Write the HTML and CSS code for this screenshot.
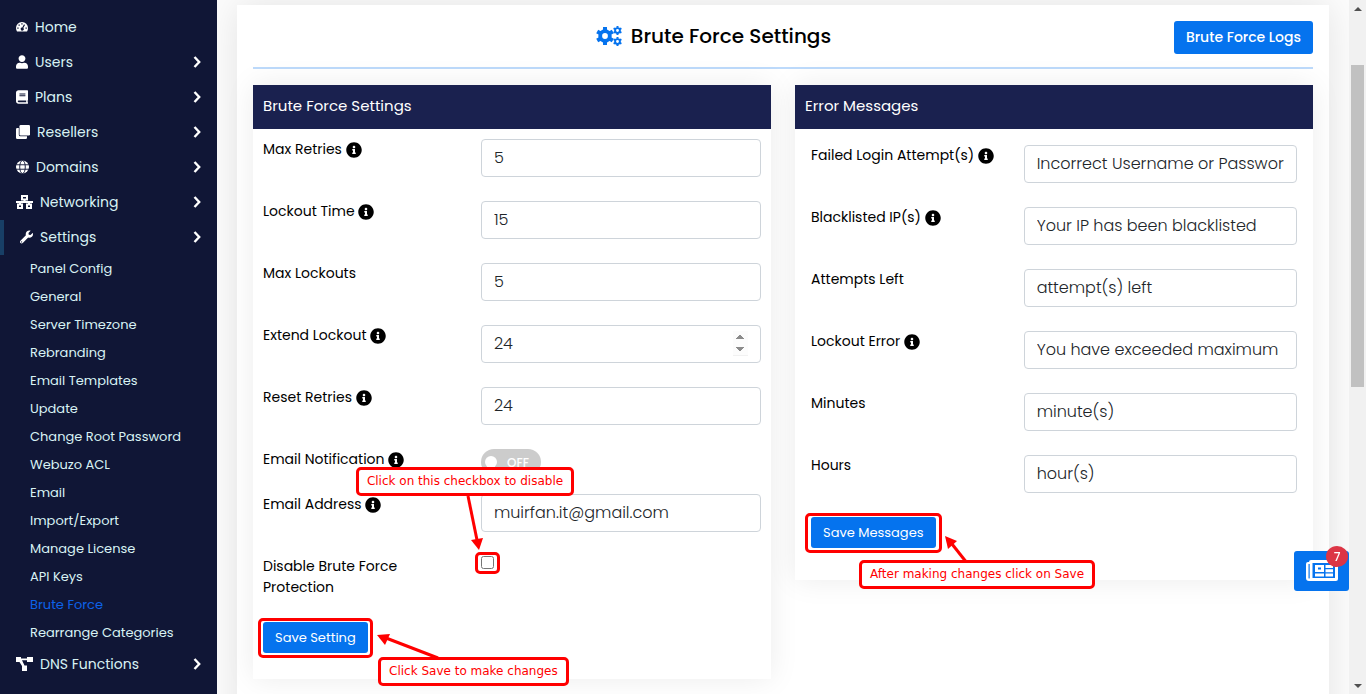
FILE: index.html
```
<!DOCTYPE html>
<html lang="en">
<head>
<meta charset="utf-8">
<title>Brute Force Settings</title>
<link rel="stylesheet" href="styles.css">
</head>
<body>
<svg class="defs" aria-hidden="true">
  <symbol id="info" viewBox="0 0 512 512"><path d="M256 8C119.043 8 8 119.083 8 256c0 136.997 111.043 248 248 248s248-111.003 248-248C504 119.083 392.957 8 256 8zm0 110c23.196 0 42 18.804 42 42s-18.804 42-42 42-42-18.804-42-42 18.804-42 42-42zm56 254c0 6.627-5.373 12-12 12h-88c-6.627 0-12-5.373-12-12v-24c0-6.627 5.373-12 12-12h12v-64h-12c-6.627 0-12-5.373-12-12v-24c0-6.627 5.373-12 12-12h64c6.627 0 12 5.373 12 12v100h12c6.627 0 12 5.373 12 12v24z"/></symbol>
  <symbol id="chevron" viewBox="0 0 8 12"><path d="M1.500 1 6.200 6l-4.700 5" fill="none" stroke="currentColor" stroke-width="2.400"/></symbol>
  <symbol id="gear" viewBox="-10 -10 20 20">
    <path fill-rule="evenodd" d="M0-7.500A7.500 7.500 0 1 1 0 7.500A7.500 7.500 0 1 1 0-7.500M0-3.200A3.200 3.200 0 1 0 0 3.200A3.200 3.200 0 1 0 0-3.200"/>
    <g id="teeth"><rect x="-2.200" y="-10" width="4.400" height="4"/><rect x="-2.200" y="6" width="4.400" height="4"/></g>
    <use href="#teeth" transform="rotate(60)"/><use href="#teeth" transform="rotate(120)"/>
  </symbol>
</svg>

<nav class="sidebar">
  <a class="item" href="#"><svg class="i12" viewBox="0 0 12 12"><path fill-rule="evenodd" d="M6 1a6 6 0 0 1 6 6c0 1.400-.4 2.700-1 3.500H1A6.500 6.500 0 0 1 0 7a6 6 0 0 1 6-6M5.300 2.200v1.300h1.300V2.200zM2.500 3.500v1.300h1.300V3.500zM1.300 6.500v1.300h1.300V6.500zM9.500 6.500v1.300h1.300V6.500zM8 3.300 6.300 6.600a1.500 1.500 0 1 0 1 .5L9 3.900z"/></svg>Home</a>
  <a class="item" href="#"><svg class="i12" viewBox="0 0 448 512"><path d="M224 256c70.700 0 128-57.300 128-128S294.700 0 224 0 96 57.300 96 128s57.300 128 128 128zm89.600 32h-16.700c-22.200 10.200-46.900 16-72.900 16s-50.600-5.800-72.900-16h-16.700C60.200 288 0 348.200 0 422.400V464c0 26.500 21.500 48 48 48h352c26.500 0 48-21.500 48-48v-41.600c0-74.200-60.200-134.400-134.400-134.400z"/></svg>Users<svg class="chev"><use href="#chevron"/></svg></a>
  <a class="item" href="#"><svg class="i12" viewBox="0 0 448 512"><path d="M448 360V24c0-13.300-10.700-24-24-24H96C43 0 0 43 0 96v320c0 53 43 96 96 96h328c13.300 0 24-10.700 24-24v-16c0-7.500-3.500-14.300-8.900-18.700-4.200-15.400-4.200-59.300 0-74.700 5.400-4.300 8.900-11.100 8.900-18.600zM128 134c0-3.300 2.700-6 6-6h212c3.300 0 6 2.700 6 6v20c0 3.300-2.700 6-6 6H134c-3.300 0-6-2.700-6-6v-20zm0 64c0-3.300 2.700-6 6-6h212c3.300 0 6 2.700 6 6v20c0 3.300-2.700 6-6 6H134c-3.300 0-6-2.700-6-6v-20zm253.400 250H96c-17.700 0-32-14.300-32-32 0-17.600 14.400-32 32-32h285.400c-1.900 17.100-1.900 46.900 0 64z"/></svg>Plans<svg class="chev"><use href="#chevron"/></svg></a>
  <a class="item" href="#"><svg class="i14" viewBox="0 0 14 14"><rect x="3.500" y="0" width="10.500" height="10.500" rx="1.200"/><path d="M2.800 3v6.800A1.500 1.500 0 0 0 4.300 11.300H11v1.400a1.300 1.300 0 0 1-1.300 1.300H1.300A1.300 1.300 0 0 1 0 12.700V4.300A1.300 1.300 0 0 1 1.300 3z"/></svg>Resellers<svg class="chev"><use href="#chevron"/></svg></a>
  <a class="item" href="#"><svg class="i13" viewBox="0 0 14 14"><circle cx="7" cy="7" r="7"/><g class="cut"><ellipse cx="7" cy="7" rx="3" ry="7"/><path d="M0 4.600h14M0 9.400h14"/></g></svg>Domains<svg class="chev"><use href="#chevron"/></svg></a>
  <a class="item" href="#"><svg class="i17" viewBox="0 0 17 14"><g class="line"><path d="M6 1h5v3.500H6zM2 9.500h4V13H2zM11 9.500h4V13h-4zM8.500 4.500V7M0 7h17M4 7v2.500M13 7v2.500"/></g></svg>Networking<svg class="chev"><use href="#chevron"/></svg></a>
  <a class="item current" href="#"><svg class="i13" viewBox="0 0 512 512"><path d="M507.730 109.100c-2.240-9.030-13.540-12.090-20.120-5.510l-74.360 74.360-67.880-11.310-11.310-67.880 74.360-74.360c6.620-6.620 3.430-17.900-5.660-20.160-47.380-11.740-99.550.91-136.580 37.930-39.640 39.640-50.550 97.100-34.050 147.200L18.740 402.760c-24.990 24.990-24.990 65.510 0 90.500 24.990 24.990 65.510 24.990 90.500 0l213.210-213.210c50.120 16.710 107.470 5.680 147.370-34.220 37.070-37.070 49.700-89.320 37.910-136.730zM64 472c-13.250 0-24-10.750-24-24 0-13.260 10.750-24 24-24s24 10.740 24 24c0 13.250-10.750 24-24 24z"/></svg>Settings<svg class="chev"><use href="#chevron"/></svg></a>
  <ul class="sub">
    <li><a href="#">Panel Config</a></li>
    <li><a href="#">General</a></li>
    <li><a href="#">Server Timezone</a></li>
    <li><a href="#">Rebranding</a></li>
    <li><a href="#">Email Templates</a></li>
    <li><a href="#">Update</a></li>
    <li><a href="#">Change Root Password</a></li>
    <li><a href="#">Webuzo ACL</a></li>
    <li><a href="#">Email</a></li>
    <li><a href="#">Import/Export</a></li>
    <li><a href="#">Manage License</a></li>
    <li><a href="#">API Keys</a></li>
    <li><a class="active" href="#">Brute Force</a></li>
    <li><a href="#">Rearrange Categories</a></li>
  </ul>
  <a class="item" href="#"><svg class="i17" viewBox="0 0 17 14"><path d="M0 0h5v1.500h6V0h6v5h-6V3.300H6L8.500 8.500H11V14H6V9L3.500 5H0z"/></svg>DNS Functions<svg class="chev"><use href="#chevron"/></svg></a>
</nav>

<main class="main">
  <section class="card">
    <header class="head">
      <h1><svg class="gears" viewBox="0 0 26 20"><use href="#gear" x="0" y="1" width="18" height="18"/><use href="#gear" x="17" y="0" width="9" height="9"/><use href="#gear" x="17" y="11" width="9" height="9"/></svg>Brute Force Settings</h1>
      <a class="btn logs" href="#">Brute Force Logs</a>
    </header>
    <div class="panels">
      <form class="panel">
        <h2>Brute Force Settings</h2>
        <div class="fields">
          <div class="row"><label for="retries">Max Retries <svg class="info"><use href="#info"/></svg></label><input class="text" id="retries" type="number" value="5"></div>
          <div class="row"><label for="time">Lockout Time <svg class="info"><use href="#info"/></svg></label><input class="text" id="time" type="number" value="15"></div>
          <div class="row"><label for="max">Max Lockouts</label><input class="text" id="max" type="number" value="5"></div>
          <div class="row"><label for="extend">Extend Lockout <svg class="info"><use href="#info"/></svg></label><input class="text spin" id="extend" type="number" value="24"></div>
          <div class="row"><label for="reset">Reset Retries <svg class="info"><use href="#info"/></svg></label><input class="text" id="reset" type="number" value="24"></div>
          <div class="row short"><label for="notify">Email Notification <svg class="info"><use href="#info"/></svg></label><span class="switch"><input id="notify" type="checkbox"><span>OFF</span></span></div>
          <div class="row"><label for="email">Email Address <svg class="info"><use href="#info"/></svg></label><input class="text" id="email" type="text" value="muirfan.it@gmail.com"></div>
          <div class="row"><label for="disable">Disable Brute Force<br>Protection</label>
            <span class="target tick"><input id="disable" type="checkbox">
              <svg class="arrow arrow-tick" viewBox="0 0 20 58"><path class="shaft" d="M5 2 14 46"/><path d="M16 56 8 46l12-2z"/></svg>
              <span class="note note-tick">Click on this checkbox to disable</span></span></div>
          <span class="target"><button class="btn" type="button">Save Setting</button>
            <svg class="arrow arrow-setting" viewBox="0 0 64 28"><path class="shaft" d="M62 26 10 6"/><path d="M1 3 14 2 9 13z"/></svg>
            <span class="note note-setting">Click Save to make changes</span></span>
        </div>
      </form>
      <form class="panel">
        <h2>Error Messages</h2>
        <div class="fields wide">
          <div class="row"><label for="failed">Failed Login Attempt(s) <svg class="info"><use href="#info"/></svg></label><input class="text" id="failed" type="text" value="Incorrect Username or Password"></div>
          <div class="row"><label for="black">Blacklisted IP(s) <svg class="info"><use href="#info"/></svg></label><input class="text" id="black" type="text" value="Your IP has been blacklisted"></div>
          <div class="row"><label for="left">Attempts Left</label><input class="text" id="left" type="text" value="attempt(s) left"></div>
          <div class="row"><label for="lockerr">Lockout Error <svg class="info"><use href="#info"/></svg></label><input class="text" id="lockerr" type="text" value="You have exceeded maximum"></div>
          <div class="row"><label for="minutes">Minutes</label><input class="text" id="minutes" type="text" value="minute(s)"></div>
          <div class="row"><label for="hours">Hours</label><input class="text" id="hours" type="text" value="hour(s)"></div>
          <span class="target"><button class="btn" type="button">Save Messages</button>
            <svg class="arrow arrow-messages" viewBox="0 0 26 30"><path class="shaft" d="M23 28 8 9"/><path d="M1 1 13 6 4 14z"/></svg>
            <span class="note note-messages">After making changes click on Save</span></span>
        </div>
      </form>
    </div>
  </section>
</main>

<div class="scrollbar" aria-hidden="true"><i class="up"></i><i class="thumb"></i><i class="down"></i></div>
<button class="news" type="button" aria-label="News"><svg viewBox="0 0 32 22"><path fill-rule="evenodd" d="M5 0h25a2 2 0 0 1 2 2v17a2 2 0 0 1-2 2H3a3 3 0 0 1-3-3V4a2 2 0 0 1 2-2h1a2 2 0 0 1 2-2M2.500 4v14a.6.600 0 0 0 1.200 0V4zM6.500 3v15h22.500V3z"/><path fill-rule="evenodd" d="M9 5h9v7H9zM12 7.500v2h3v-2zM19.500 5H27v3h-7.500zM19.500 9.200H27v3h-7.500zM9 13.500h9v3H9zM19.500 13.500H27v3h-7.500z"/></svg><span class="badge">7</span></button>
</body>
</html>
```
FILE: styles.css
```
* { box-sizing: border-box; }
body {
  margin: 0; height: 100vh; overflow: hidden;
  display: grid; grid-template-columns: 217px 1fr 17px;
  font: 14px/21px Poppins, Inter, sans-serif; color: #000; background: #fff;
}
.defs { position: absolute; width: 0; height: 0; }
svg { fill: currentColor; flex: none; }
a { text-decoration: none; color: inherit; }

.sidebar { background: #101636; color: #d8f2f4; padding-top: 10px; overflow: hidden; }
.item { display: flex; align-items: center; gap: 7px; height: 35px; padding: 0 16px 1px; }
.item svg { color: #fff; height: 14px; }
.item.current { border-left: 4px solid #183f66; }
.i12 { width: 12px; }
.i13 { width: 13px; }
.i14 { width: 14px; }
.i17 { width: 17px; }
.item .chev { width: 8px; height: 12px; margin-left: auto; }
.cut { fill: none; stroke: #101636; stroke-width: 1; }
.line { fill: none; stroke: #fff; stroke-width: 2; }
.sub { list-style: none; margin: 0; padding: 0 0 0 30px; font-size: 13px; }
.sub a { display: block; line-height: 28px; }
.sub .active { color: #0d62e8; }

.main { overflow: hidden; padding: 5px 20px 0; background: #fcfcfc; }
.card { background: #fff; padding: 16px 16px 80px; box-shadow: 0 0 35px rgba(0, 0, 0, .1); }
.head { display: flex; align-items: center; padding-bottom: 13px; border-bottom: 2px solid #bddafb; }
h1 { flex: 1; display: flex; justify-content: center; align-items: center; gap: 9px; margin: 0; padding-bottom: 4px; font-size: 20px; line-height: 28px; font-weight: 500; }
.gears { width: 26px; height: 20px; color: #0573ee; }
.btn { display: inline-block; border: 0; border-radius: 3px; background: #0573ee; color: #fff; font: 400 13px/21px Poppins, Inter, sans-serif; padding: 5px 12px; }
.logs { font-size: 14px; font-weight: 500; padding: 6px 12px; }

.panels { display: grid; grid-template-columns: 1fr 1fr; gap: 24px; align-items: start; margin-top: 16px; }
.panel { background: #fff; box-shadow: 0 0 28px rgba(0, 0, 0, .08); }
h2 { margin: 0; padding: 9px 10px 11px; background: #1a214f; color: #fff; font-size: 15px; line-height: 24px; font-weight: 400; }
.fields { padding: 10px 10px 26px; }
.wide { padding: 16px 16px 32px; }
.row { display: grid; grid-template-columns: 7fr 9fr; align-items: start; margin-bottom: 24px; }
.short { margin-bottom: 19px; }
.info { width: 16px; height: 16px; vertical-align: -4px; }
.text { width: 100%; height: 38px; border: 1px solid #ced4da; border-radius: 4px; background: #fff; padding: 5px 12px 7px; font: 300 16px/24px Poppins, Inter, sans-serif; color: #212529; }
.text::-webkit-inner-spin-button { opacity: 0; }
.spin { background: linear-gradient(#f1f1f1, #f1f1f1) right 12px center / 15px 24px no-repeat #fff; }
.spin::-webkit-inner-spin-button { opacity: 1; }
.switch { display: flex; align-items: center; width: 60px; height: 26px; border-radius: 13px; background: #ccc; color: #fff; font-size: 12px; font-weight: 500; padding: 0 12px 0 4px; justify-content: space-between; }
.switch input { appearance: none; width: 12px; height: 12px; margin: 0; border-radius: 50%; background: #fff; }

.target { position: relative; display: block; width: fit-content; }
.target .btn { display: block; }
.tick input { display: block; width: 13px; height: 13px; margin: 0; }
.target::before { content: ""; position: absolute; inset: -4px -5px -5px; border: 3px solid #f00; border-radius: 5px; }
.tick::before, .wide .target::before { inset: -4px -6px -5px; }
.note { position: absolute; z-index: 1; padding: 1px 8px; border: 3px solid #f00; border-radius: 5px; background: #fff; color: #f00; font: 12px/21px Verdana, "DejaVu Sans", sans-serif; white-space: nowrap; }
.arrow { position: absolute; color: #f00; }
.shaft { stroke: #f00; stroke-width: 3; fill: none; }
.note-tick { left: -125px; top: -89px; }
.arrow-tick { width: 20px; height: 58px; left: -18px; top: -62px; }
.note-setting { left: 115px; top: 35px; }
.arrow-setting { width: 64px; height: 28px; left: 113px; top: 10px; }
.note-messages { left: 48px; top: 43px; }
.arrow-messages { width: 26px; height: 30px; left: 133px; top: 18px; }

.scrollbar { background: #f1f1f1; position: relative; }
.scrollbar i { position: absolute; }
.thumb { left: 2px; right: 2px; top: 65px; height: 322px; background: #c1c1c1; }
.up, .down { left: 5px; border: 4px solid transparent; }
.up { top: 3px; border-bottom-color: #505050; }
.down { bottom: 2px; border-top-color: #505050; }
.news { position: fixed; right: 17px; top: 551px; width: 55px; height: 40px; border: 0; border-radius: 3px; background: #0573ee; color: #fff; padding: 0; display: grid; place-items: center; }
.news svg { width: 32px; height: 22px; }
.badge { position: absolute; top: -5px; right: 1px; width: 22px; height: 21px; border-radius: 50%; background: #dc3545; font: 500 12px/21px Poppins, Inter, sans-serif; }
```
